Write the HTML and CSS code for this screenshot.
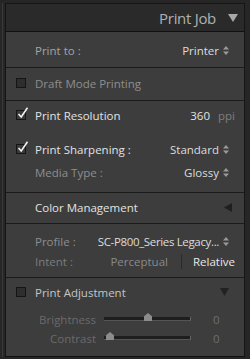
FILE: index.html
```html
<!DOCTYPE html>
<html>
<head>
<meta charset="utf-8">
<link rel="stylesheet" href="styles.css">
</head>
<body>
<div class="frame">
  <div class="panel">
    <div class="header">
      <span class="title">Print Job</span>
      <svg class="tri-down" width="10" height="8" viewBox="0 0 10 8"><path d="M0 0H10L5 8Z" fill="#a8a8a8"/></svg>
    </div>
    <div class="section s-printto">
      <div class="row">
        <span class="label">Print to :</span>
        <span class="value">Printer<svg class="updown" width="6" height="9" viewBox="0 0 6 9"><path d="M0 3.5L3 0L6 3.5Z M0 5.5L3 9L6 5.5Z" fill="#9a9a9a"/></svg></span>
      </div>
    </div>
    <div class="section s-draft">
      <div class="row">
        <span class="check"></span>
        <span class="label dim">Draft Mode Printing</span>
      </div>
    </div>
    <div class="section s-res">
      <div class="row r1">
        <span class="check on"><svg class="tick" width="12" height="12" viewBox="0 0 12 12"><path d="M1.5 7L4.2 10L10.5 0.8" fill="none" stroke="#f2f2f2" stroke-width="1.6"/></svg></span>
        <span class="label bright">Print Resolution</span>
        <span class="value res"><span class="bright">360</span><span class="unit">ppi</span></span>
      </div>
      <div class="row r2">
        <span class="check on"><svg class="tick" width="12" height="12" viewBox="0 0 12 12"><path d="M1.5 7L4.2 10L10.5 0.8" fill="none" stroke="#f2f2f2" stroke-width="1.6"/></svg></span>
        <span class="label bright">Print Sharpening :</span>
        <span class="value">Standard<svg class="updown" width="6" height="9" viewBox="0 0 6 9"><path d="M0 3.5L3 0L6 3.5Z M0 5.5L3 9L6 5.5Z" fill="#9a9a9a"/></svg></span>
      </div>
      <div class="row r3">
        <span class="label dim indent">Media Type :</span>
        <span class="value">Glossy<svg class="updown" width="6" height="9" viewBox="0 0 6 9"><path d="M0 3.5L3 0L6 3.5Z M0 5.5L3 9L6 5.5Z" fill="#9a9a9a"/></svg></span>
      </div>
    </div>
    <div class="section s-cm">
      <div class="row">
        <span class="label bright">Color Management</span>
        <svg class="tri-left" width="8" height="9" viewBox="0 0 8 9"><path d="M8 0V9L0 4.5Z" fill="#1f1f1f"/></svg>
      </div>
    </div>
    <div class="section s-profile">
      <div class="row p1">
        <span class="label dim">Profile :</span>
        <span class="value profile">SC-P800_Series Legacy...<svg class="updown" width="6" height="9" viewBox="0 0 6 9"><path d="M0 3.5L3 0L6 3.5Z M0 5.5L3 9L6 5.5Z" fill="#9a9a9a"/></svg></span>
      </div>
      <div class="row p2">
        <span class="label darker">Intent :</span>
        <span class="intent">
          <span class="perc">Perceptual</span>
          <span class="divider"></span>
          <span class="rel">Relative</span>
        </span>
      </div>
    </div>
    <div class="section s-adj">
      <div class="row a1">
        <span class="check"></span>
        <span class="label mid">Print Adjustment</span>
        <svg class="tri-down2" width="9" height="8" viewBox="0 0 9 8"><path d="M0 0H9L4.5 8Z" fill="#222"/></svg>
      </div>
      <div class="slider-row b1">
        <span class="slabel">Brightness</span>
        <span class="track"><span class="thumb" style="left:40px"></span></span>
        <span class="sval">0</span>
      </div>
      <div class="slider-row b2">
        <span class="slabel">Contrast</span>
        <span class="track"><span class="thumb" style="left:2px"></span></span>
        <span class="sval">0</span>
      </div>
    </div>
  </div>
</div>
</body>
</html>
```
FILE: styles.css
```css
html, body {
  margin: 0;
  padding: 0;
}
body {
  width: 250px;
  height: 359px;
  background: #262626;
  font-family: "Open Sans", "Noto Sans", sans-serif;
  font-size: 11.5px;
  color: #9a9a9a;
  overflow: hidden;
  white-space: nowrap;
}
.frame {
  padding: 3px 5px 2px 2px;
  height: 359px;
  box-sizing: border-box;
  background: #262626;
}
.panel {
  border-left: 1px solid #3a3a3a;
  padding-left: 2px;
  height: 354px;
  display: flex;
  flex-direction: column;
}
.header {
  background: #2a2a2a;
  border: 1px solid #151515;
  border-bottom: 1px solid #111;
  display: flex;
  align-items: center;
  justify-content: flex-end;
  padding-right: 6px;
  box-sizing: border-box;
  height: 29px;
  flex: none;
}
.title {
  font-size: 15px;
  color: #b0b0b0;
  margin-right: 12px;
  letter-spacing: -0.3px;
}
.tri-down {
  margin-top: 1px;
}
.section {
  background: #3d3d3d;
  border-left: 1px solid #151515;
  border-right: 1px solid #151515;
  border-bottom: 1px solid #1b1b1b;
  box-sizing: border-box;
  padding: 0 0 0 10px;
  display: flex;
  flex-direction: column;
  flex: none;
}
.row {
  display: flex;
  align-items: center;
  height: 20px;
  padding-right: 15px;
  position: relative;
}
.label {
  color: #a4a4a4;
}
.label.indent, .s-printto .label, .s-cm .label, .s-profile .label {
  margin-left: 19px;
}
.dim { color: #8e8e8e; }
.darker { color: #7c7c7c; }
.bright { color: #e2e2e2; }
.mid { color: #c4c4c4; }
.value {
  margin-left: auto;
  color: #dcdcdc;
  display: flex;
  align-items: center;
}
.updown {
  margin-left: 4px;
}
.value.res {
  margin-right: -6px;
}
.unit {
  color: #7f7f7f;
  margin-left: 8px;
}
.check {
  width: 8px;
  height: 8px;
  border: 1px solid #151515;
  background: #2e2e2e;
  margin-right: 9px;
  flex: none;
  position: relative;
}
.check.on {
  background: #3a3a3a;
}
.tick {
  position: absolute;
  left: 0px;
  top: -4px;
}
.s-printto { height: 36px; padding-top: 8px; }
.s-draft { height: 33px; padding-top: 5px; }
.s-res { height: 92px; padding-top: 4px; }
.s-res .r2 { margin-top: 14px; }
.s-res .r3 { margin-top: 3px; }
.s-cm { height: 31px; padding-top: 4px; }
.tri-left { margin-left: auto; margin-right: -3px; }
.s-profile { height: 54px; padding-top: 7px; }
.profile { letter-spacing: -0.35px; }
.profile .updown { margin-left: 4px; }
.intent {
  margin-left: auto;
  display: flex;
  align-items: center;
  margin-right: -6px;
}
.perc { color: #8a8a8a; }
.divider {
  width: 1px;
  height: 15px;
  background: #2a2a2a;
  margin: 0 11px 0 13px;
}
.rel { color: #e8e8e8; }
.s-adj { padding-top: 4px; border-bottom: 1px solid #111; flex: 1; }
.tri-down2 { margin-left: auto; margin-right: 0; }
.slider-row {
  display: flex;
  align-items: center;
  height: 18px;
}
.b1 { margin-top: 8px; }
.b2 { margin-top: 1px; }
.slabel {
  width: 80px;
  text-align: right;
  color: #6a6a6a;
  flex: none;
}
.track {
  position: relative;
  width: 86px;
  height: 3px;
  margin-left: 8px;
  background: #1e1e1e;
  border-bottom: 1px solid #555;
  border-right: 1px solid #666;
  flex: none;
}
.thumb {
  position: absolute;
  top: -4px;
  width: 8px;
  height: 8px;
  background: #8c8c8c;
  clip-path: polygon(50% 0, 100% 40%, 100% 100%, 0 100%, 0 40%);
}
.sval {
  margin-left: 22px;
  color: #6e6e6e;
}
```
